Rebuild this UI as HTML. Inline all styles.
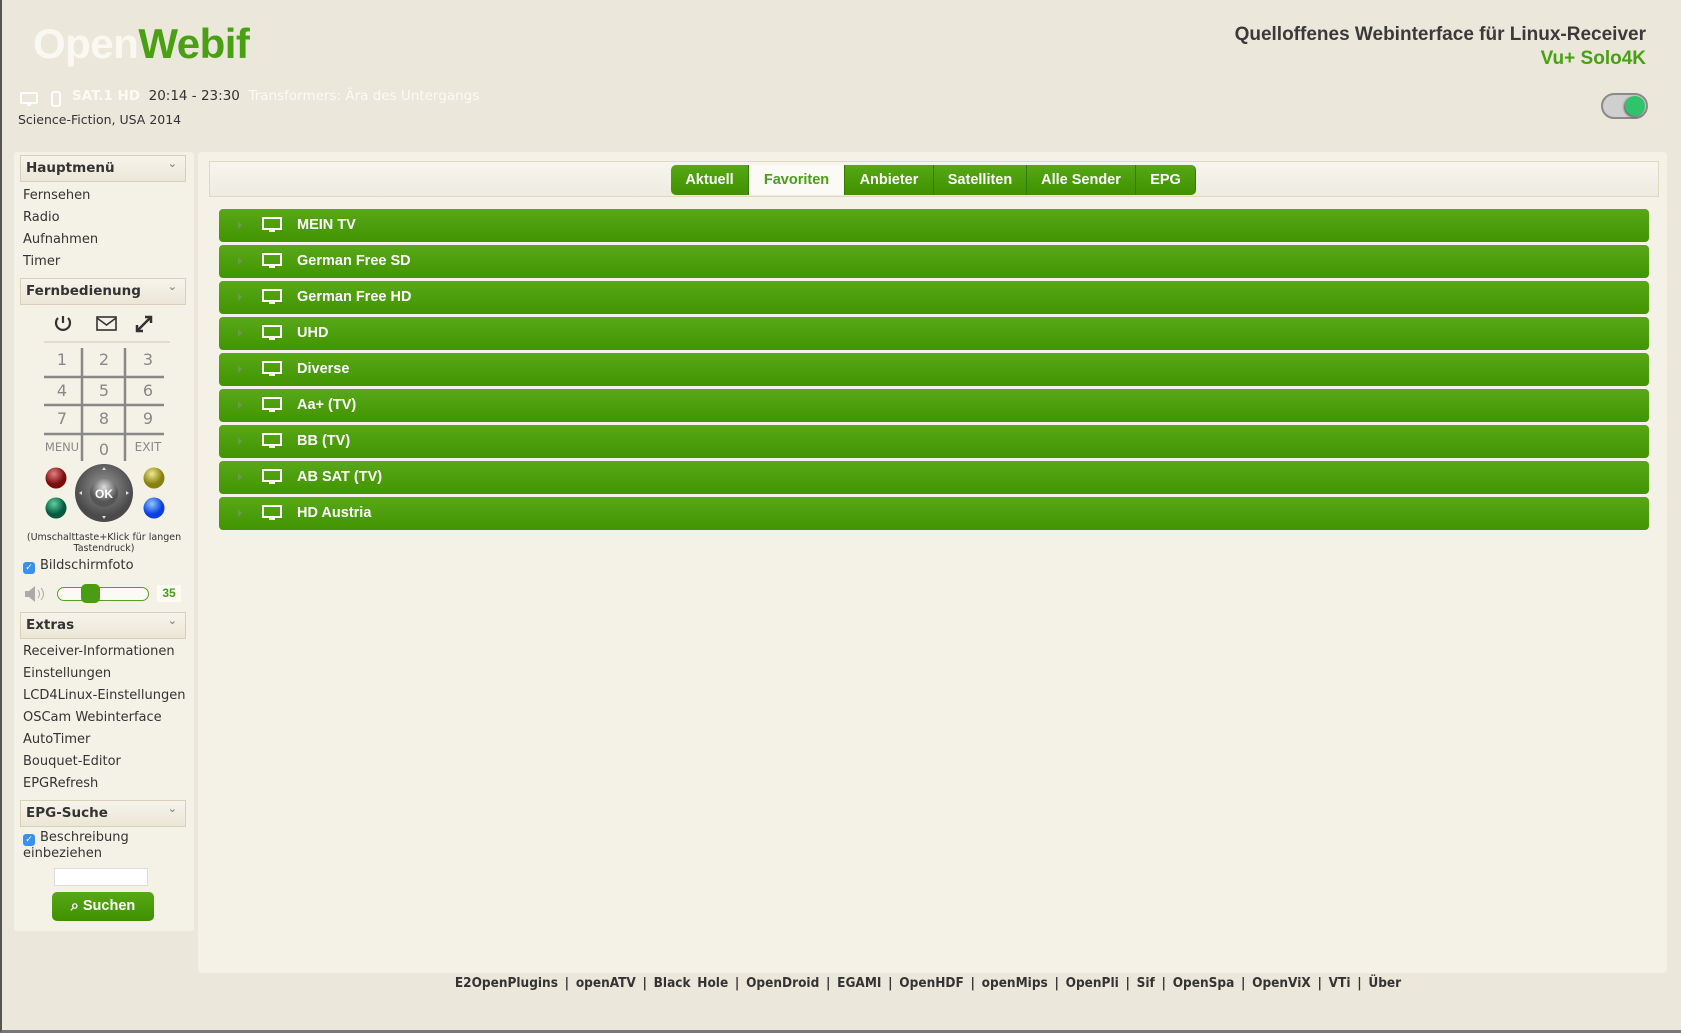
<!DOCTYPE html>
<html><head><meta charset="utf-8"><style>
*{box-sizing:border-box;margin:0;padding:0}
html,body{width:1681px;height:1033px;overflow:hidden}
body{background:#ebe7da;font-family:"DejaVu Sans","Liberation Sans",sans-serif;color:#333;position:relative;border-left:2px solid #555;border-bottom:3px solid #777}
.a{position:absolute}
.logo{left:31px;top:20px;font:bold 42px "Liberation Sans",sans-serif;letter-spacing:-0.5px}
.hr{right:35px;top:23px;text-align:right;font:bold 19px "Liberation Sans",sans-serif;color:#3a3a3a;line-height:24px}
.toggle{left:1599px;top:93px;width:47px;height:26px;border-radius:13px;background:#cfcfcf;border:2px solid #8a8a8a}
.toggle:after{content:"";position:absolute;right:1px;top:1px;width:20px;height:20px;border-radius:50%;background:#2fc46a;box-shadow:-1px 1px 2px #555}
.side{left:12px;top:152px;width:180px;height:779px;background:#f4f1e6;border-radius:3px}
.hd{position:absolute;left:6px;width:166px;height:27px;background:linear-gradient(#f6f4ec,#ebe6d6);border:1px solid #d8d0b8;font-weight:bold;font-size:13.5px;padding:4px 5px;color:#333}
.hd:after{content:"⌄";position:absolute;right:8px;top:1px;font-size:11px;color:#888}
.mi{position:absolute;left:9px;font-size:13px;color:#333}
.main{left:196px;top:152px;width:1469px;height:821px;background:#f4f2e6;border-radius:4px}
.bar{left:207px;top:161px;width:1450px;height:36px;border:1px solid #e0d8c0;background:linear-gradient(#f7f5ee,#eeebdf)}
.tab{position:absolute;top:165px;height:30px;background:linear-gradient(#57a716,#3f9100);color:#fff;font:bold 14.5px "Liberation Sans",sans-serif;text-align:center;line-height:30px;border-right:1px solid #357d00}
.row{position:absolute;left:217px;width:1430px;height:33px;border-radius:4px;background:linear-gradient(#58a81a,#429400);color:#fff;font:bold 14.5px "Liberation Sans",sans-serif;line-height:33px}
.row .t{position:absolute;left:78px}
.row .tri{position:absolute;left:19px;top:12px;border-left:4px solid #6a9a50;border-top:4px solid transparent;border-bottom:4px solid transparent}
.row svg{position:absolute;left:43px;top:8px}
.k{position:absolute;font-size:16px;color:#888;width:30px;text-align:center}
.ft{left:420px;top:975px;width:1012px;text-align:center;font:bold 13.5px "DejaVu Sans Condensed","DejaVu Sans",sans-serif;color:#333;word-spacing:2.5px}
.cb{position:absolute;width:12px;height:12px;border-radius:3px;background:#3a8ff0;color:#fff;font-size:9px;line-height:12px;text-align:center}
</style></head><body>
<div class="a logo"><span style="color:#faf8f2">Open</span><span style="color:#48a012">Webif</span></div>
<div class="a hr">Quelloffenes Webinterface für Linux-Receiver<br><span style="color:#48a012">Vu+ Solo4K</span></div>
<div class="a toggle"></div>
<svg class="a" style="left:18px;top:91px" width="48" height="16"><rect x="1" y="2" width="16" height="10" rx="1" fill="none" stroke="#fff" stroke-width="2"/><rect x="7" y="12" width="4" height="3" fill="#fff"/><rect x="32" y="1" width="8" height="14" rx="2" fill="none" stroke="#fff" stroke-width="1.8"/></svg>
<div class="a" style="left:70px;top:88px;font-size:13.5px;white-space:nowrap"><b style="color:#fbfaf5">SAT.1 HD</b>&nbsp; <span style="color:#333">20:14 - 23:30</span>&nbsp; <span style="color:#fbfaf5">Transformers: Ära des Untergangs</span></div>
<div class="a" style="left:16px;top:112px;font-size:12.5px">Science-Fiction, USA 2014</div>

<div class="a side">
<div class="hd" style="top:3px">Hauptmenü</div>
<div class="mi" style="top:36px">Fernsehen</div>
<div class="mi" style="top:58px">Radio</div>
<div class="mi" style="top:80px">Aufnahmen</div>
<div class="mi" style="top:102px">Timer</div>
<div class="hd" style="top:126px">Fernbedienung</div>
</div>
<svg class="a" style="left:40px;top:310px" width="130" height="160">
<g fill="none" stroke="#333" stroke-width="2.2"><path d="M21 6v7"/><path d="M16 8a7 7 0 1 0 10 0"/>
<rect x="55" y="7" width="19" height="13" stroke-width="1.6"/><path d="M55 8l9.5 7 9.5-7" stroke-width="1.6"/>
<path d="M95 21l14-14M103 7h6v6M95 15v6h6" stroke-width="2.5"/></g>
<line x1="2" y1="32" x2="128" y2="32" stroke="#ddd5be" stroke-width="1.5"/>
<g stroke="#888" stroke-width="2.5"><line x1="40" y1="38" x2="40" y2="151"/><line x1="83" y1="38" x2="83" y2="151"/>
<line x1="2" y1="67" x2="122" y2="67"/><line x1="2" y1="95" x2="122" y2="95"/><line x1="2" y1="124" x2="122" y2="124"/></g>
</svg>
<div class="k" style="left:45px;top:350px">1</div><div class="k" style="left:87px;top:350px">2</div><div class="k" style="left:131px;top:350px">3</div>
<div class="k" style="left:45px;top:381px">4</div><div class="k" style="left:87px;top:381px">5</div><div class="k" style="left:131px;top:381px">6</div>
<div class="k" style="left:45px;top:409px">7</div><div class="k" style="left:87px;top:409px">8</div><div class="k" style="left:131px;top:409px">9</div>
<div class="k" style="left:40px;top:440px;font-size:11.5px;width:40px">MENU</div><div class="k" style="left:87px;top:440px">0</div><div class="k" style="left:126px;top:440px;font-size:12px;width:40px">EXIT</div>
<svg class="a" style="left:40px;top:460px" width="130" height="66">
<defs><radialGradient id="r" cx=".4" cy=".3"><stop offset="0" stop-color="#e08080"/><stop offset="1" stop-color="#7a0c0c"/></radialGradient>
<radialGradient id="y" cx=".4" cy=".3"><stop offset="0" stop-color="#eeea90"/><stop offset="1" stop-color="#888010"/></radialGradient>
<radialGradient id="g" cx=".4" cy=".3"><stop offset="0" stop-color="#60d0a0"/><stop offset="1" stop-color="#045a40"/></radialGradient>
<radialGradient id="b" cx=".4" cy=".3"><stop offset="0" stop-color="#90c8ff"/><stop offset="1" stop-color="#0a40e0"/></radialGradient>
<radialGradient id="w" cx=".5" cy=".4"><stop offset="0" stop-color="#999"/><stop offset="1" stop-color="#4a4a4a"/></radialGradient>
<radialGradient id="o" cx=".5" cy=".3"><stop offset="0" stop-color="#ddd"/><stop offset="1" stop-color="#555"/></radialGradient></defs>
<circle cx="14" cy="18" r="10.5" fill="url(#r)"/><circle cx="112" cy="18" r="10.5" fill="url(#y)"/>
<circle cx="14" cy="48" r="10.5" fill="url(#g)"/><circle cx="112" cy="48" r="10.5" fill="url(#b)"/>
<circle cx="62" cy="33" r="29" fill="url(#w)"/><circle cx="62" cy="33" r="14" fill="url(#o)"/>
<text x="62" y="38" font-size="12" font-weight="bold" fill="#fff" text-anchor="middle" font-family="Liberation Sans">OK</text>
<g fill="#ddd"><path d="M62 7l-2 3h4z"/><path d="M62 59l-2-3h4z"/><path d="M37 33l3-2v4z"/><path d="M87 33l-3-2v4z"/></g>
</svg>
<div class="a" style="left:12px;top:532px;width:180px;text-align:center;font-size:9.5px;line-height:11px">(Umschalttaste+Klick für langen<br>Tastendruck)</div>
<div class="cb" style="left:21px;top:562px">✓</div><div class="a" style="left:38px;top:558px;font-size:13px">Bildschirmfoto</div>
<svg class="a" style="left:20px;top:584px" width="26" height="20"><path d="M3 7h4l6-5v16l-6-5H3z" fill="#aaa"/><path d="M16 6q3 4 0 8M19 4q5 6 0 12" stroke="#aaa" fill="none"/></svg>
<div class="a" style="left:55px;top:587px;width:92px;height:14px;border:1.5px solid #5aa020;border-radius:7px;background:#fbfaf4"></div>
<div class="a" style="left:79px;top:584px;width:19px;height:19px;border-radius:5px;background:#4a9d12"></div>
<div class="a" style="left:155px;top:585px;width:24px;height:17px;background:#fbfaf4;color:#4a9d12;font:bold 12px 'Liberation Sans',sans-serif;text-align:center;line-height:17px">35</div>
<div class="a" style="left:12px;top:600px;width:180px">
<div class="hd" style="top:12px">Extras</div>
<div class="mi" style="top:44px">Receiver-Informationen</div>
<div class="mi" style="top:66px">Einstellungen</div>
<div class="mi" style="top:88px">LCD4Linux-Einstellungen</div>
<div class="mi" style="top:110px">OSCam Webinterface</div>
<div class="mi" style="top:132px">AutoTimer</div>
<div class="mi" style="top:154px">Bouquet-Editor</div>
<div class="mi" style="top:176px">EPGRefresh</div>
<div class="hd" style="top:200px">EPG-Suche</div>
</div>
<div class="cb" style="left:21px;top:834px">✓</div>
<div class="a" style="left:38px;top:830px;font-size:13px">Beschreibung</div>
<div class="a" style="left:21px;top:846px;font-size:13px">einbeziehen</div>
<div class="a" style="left:52px;top:868px;width:94px;height:18px;background:#fff;border:1px solid #ddd"></div>
<div class="a" style="left:50px;top:892px;width:102px;height:29px;border-radius:5px;background:linear-gradient(#57a716,#3f9100);color:#fff;font:bold 14.5px 'Liberation Sans',sans-serif;text-align:center;line-height:29px">⌕ Suchen</div>

<div class="a main"></div>
<div class="a bar"></div>
<div class="tab" style="left:669px;width:78px;border-radius:5px 0 0 5px">Aktuell</div>
<div class="tab" style="left:747px;width:96px;background:#fbfaf5;color:#48a012">Favoriten</div>
<div class="tab" style="left:843px;width:89px">Anbieter</div>
<div class="tab" style="left:932px;width:93px">Satelliten</div>
<div class="tab" style="left:1025px;width:109px">Alle Sender</div>
<div class="tab" style="left:1134px;width:60px;border-radius:0 5px 5px 0">EPG</div>

<div class="row" style="top:209px"><i class="tri"></i><svg width="20" height="17"><rect x="1" y="1" width="18" height="11" fill="none" stroke="#fff" stroke-width="2"/><rect x="7" y="12" width="6" height="3" fill="#fff"/></svg><span class="t">MEIN TV</span></div>
<div class="row" style="top:245px"><i class="tri"></i><svg width="20" height="17"><rect x="1" y="1" width="18" height="11" fill="none" stroke="#fff" stroke-width="2"/><rect x="7" y="12" width="6" height="3" fill="#fff"/></svg><span class="t">German Free SD</span></div>
<div class="row" style="top:281px"><i class="tri"></i><svg width="20" height="17"><rect x="1" y="1" width="18" height="11" fill="none" stroke="#fff" stroke-width="2"/><rect x="7" y="12" width="6" height="3" fill="#fff"/></svg><span class="t">German Free HD</span></div>
<div class="row" style="top:317px"><i class="tri"></i><svg width="20" height="17"><rect x="1" y="1" width="18" height="11" fill="none" stroke="#fff" stroke-width="2"/><rect x="7" y="12" width="6" height="3" fill="#fff"/></svg><span class="t">UHD</span></div>
<div class="row" style="top:353px"><i class="tri"></i><svg width="20" height="17"><rect x="1" y="1" width="18" height="11" fill="none" stroke="#fff" stroke-width="2"/><rect x="7" y="12" width="6" height="3" fill="#fff"/></svg><span class="t">Diverse</span></div>
<div class="row" style="top:389px"><i class="tri"></i><svg width="20" height="17"><rect x="1" y="1" width="18" height="11" fill="none" stroke="#fff" stroke-width="2"/><rect x="7" y="12" width="6" height="3" fill="#fff"/></svg><span class="t">Aa+ (TV)</span></div>
<div class="row" style="top:425px"><i class="tri"></i><svg width="20" height="17"><rect x="1" y="1" width="18" height="11" fill="none" stroke="#fff" stroke-width="2"/><rect x="7" y="12" width="6" height="3" fill="#fff"/></svg><span class="t">BB (TV)</span></div>
<div class="row" style="top:461px"><i class="tri"></i><svg width="20" height="17"><rect x="1" y="1" width="18" height="11" fill="none" stroke="#fff" stroke-width="2"/><rect x="7" y="12" width="6" height="3" fill="#fff"/></svg><span class="t">AB SAT (TV)</span></div>
<div class="row" style="top:497px"><i class="tri"></i><svg width="20" height="17"><rect x="1" y="1" width="18" height="11" fill="none" stroke="#fff" stroke-width="2"/><rect x="7" y="12" width="6" height="3" fill="#fff"/></svg><span class="t">HD Austria</span></div>

<div class="a ft">E2OpenPlugins | openATV | Black Hole | OpenDroid | EGAMI | OpenHDF | openMips | OpenPli | Sif | OpenSpa | OpenViX | VTi | Über</div>
</body></html>
